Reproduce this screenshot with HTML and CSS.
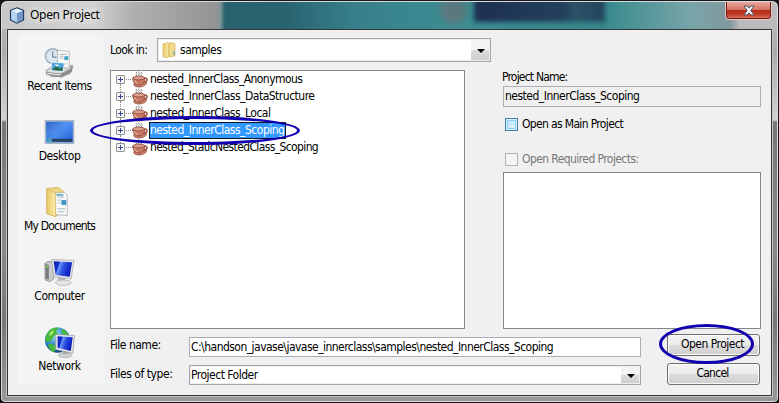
FILE: index.html
```
<!DOCTYPE html>
<html lang="en">
<head>
<meta charset="utf-8">
<title>Open Project</title>
<link rel="stylesheet" href="styles.css">
</head>
<body>
<svg width="0" height="0" class="defs" aria-hidden="true">
  <defs>
    <linearGradient id="screen" x1="0" y1="0" x2="1" y2=".3"><stop offset="0" stop-color="#0b18a8"/><stop offset=".3" stop-color="#1430d8"/><stop offset=".36" stop-color="#6d98f4"/><stop offset=".6" stop-color="#2a50e0"/><stop offset="1" stop-color="#0a1cc0"/></linearGradient>
    <linearGradient id="desk" x1="0" y1="0" x2="1" y2="1"><stop offset="0" stop-color="#1c55c4"/><stop offset=".5" stop-color="#4a8df0"/><stop offset="1" stop-color="#1d5bd0"/></linearGradient>
    <linearGradient id="fold" x1="0" y1="0" x2="1" y2="0"><stop offset="0" stop-color="#e9c964"/><stop offset="1" stop-color="#fbeeb0"/></linearGradient>
    <radialGradient id="globe" cx=".4" cy=".3" r=".7"><stop offset="0" stop-color="#9fe0f8"/><stop offset=".6" stop-color="#2d86c8"/><stop offset="1" stop-color="#123f86"/></radialGradient>
    <symbol id="cup" viewBox="0 0 16 17">
      <path d="M4 1l1 1.500-1 1 1 2M6.500 .5l1 2-1 1 1 2M9 1l1 1.500-1 1 1 2" fill="none" stroke="#777" stroke-width=".9"/>
      <path d="M2 12.500c-1.500 1.500 1 3.500 5 3.500 4.500 0 8-2.500 7.500-4.500z" fill="#c9816c" stroke="#8a4836" stroke-width=".7"/>
      <path d="M12 7c4.500-.5 4 4-1 4.200" fill="none" stroke="#a35340" stroke-width="1.500"/>
      <path d="M.8 7c-.3 3.500 2.200 7 6 7s6.200-3 6-7z" fill="#c87a65" stroke="#8b4635" stroke-width=".8"/>
      <ellipse cx="6.800" cy="7" rx="6" ry="1.900" fill="#dc9f8d" stroke="#8b4635" stroke-width=".8"/>
      <path d="M2.800 9.500c.5 1.800 1.500 2.800 2.800 3.200" fill="none" stroke="#f0c9bc"/>
    </symbol>
  </defs>
</svg>
<div class="window">
  <header class="titlebar">
    <svg class="app-icon" viewBox="0 0 16 17"><path d="M8 .8l6.500 2.700v9.500L8 16.200 1.500 13V3.500z" fill="#8fb2d6" stroke="#20345e" stroke-width="1.200"/><path d="M8 1.500l5.800 2.300L8 6.200 2.200 3.800z" fill="#e6f1fb"/><path d="M2.200 4L8 6.400v9L2.200 12.600z" fill="#b4d2ee"/><path d="M13.800 4L8 6.400v9l5.800-2.800z" fill="#6f96c4"/></svg>
    <h1>Open Project</h1>
    <i class="glass-blob"></i><i class="glass-text"></i>
    <div class="close"><svg width="12" height="11" viewBox="0 0 12 11"><path d="M1 1h3.200L6 3.300 7.800 1H11L7.800 5.500 11 10H7.800L6 7.700 4.200 10H1l3.200-4.500z" fill="#fff" stroke="#4b5068" stroke-width="1"/></svg></div>
  </header>
  <div class="client">
    <nav class="places">
      <div class="place">
        <svg viewBox="0 0 32 32"><path d="M2 25l7-5h21l-3 8-10 3H7z" fill="#d7d7d5" stroke="#999"/><path d="M2 26l15 2 10-5 2-5v8l-11 6-16-3z" fill="#8d8f8f"/><path d="M3 27l14 2v1l-14-2z" fill="#f2f2f2"/><circle cx="9" cy="10" r="7.500" fill="#dce9f0" stroke="#a3b6bf" stroke-width="1.800"/><path d="M9 5v6h4" fill="none" stroke="#6d8da0" stroke-width="1.200"/><path d="M14 4l12 1v17H14z" fill="#fafafa" stroke="#aaa" stroke-width=".8"/><path d="M16 8h8M16 10h4M16 12h4M16 18h8" stroke="#9aa4ab" stroke-width=".8"/><path d="M21 10h4v4h-4z" fill="#46a0cb"/><path d="M8 16l13 1-1 9-13-1z" fill="#4aa5da" stroke="#eee"/><path d="M8 24l5-4 3 3 3-2v4z" fill="#28683e"/><path d="M11 18l5 1-3 2z" fill="#d9f1fb"/></svg>
        <span class="t-recent">Recent Items</span>
      </div>
      <div class="place">
        <svg viewBox="0 0 32 32"><path d="M1.500 4.500h29v23h-29z" fill="url(#desk)" stroke="#a8b6c8" stroke-width="1.600"/><path d="M3 23h26v3H3z" fill="#29405d"/><path d="M3 6h26L3 20z" fill="#fff" opacity=".08"/><circle cx="5.500" cy="24.500" r="2.600" fill="#35a0d9"/><path d="M4 24h1.500v-1.500z" fill="#f06a31"/><path d="M6 25h2l-1 1z" fill="#f2d13c"/></svg>
        <span>Desktop</span>
      </div>
      <div class="place">
        <svg viewBox="0 0 32 32"><path d="M3 2l12-1 5 4v20l-8 6-9-3z" fill="#efd582" stroke="#cda94e" stroke-width=".7"/><path d="M11 7l10-1 3 3v21l-12-1z" fill="#f8fafb" stroke="#a7adb0" stroke-width=".8"/><path d="M14 11h7M14 14h4M14 17h3M14 23h8M14 26h7" stroke="#a8bac6"/><path d="M13 8h7v1.500h-7z" fill="#469eaa"/><path d="M18 14h5v5h-5z" fill="#3e93bf"/><path d="M3 2l9 5v24l-9-3z" fill="url(#fold)" stroke="#d0ad56" stroke-width=".7"/></svg>
        <span class="t-docs">My Documents</span>
      </div>
      <div class="place">
        <svg viewBox="0 0 32 32"><path d="M1 7l4-2 5 1v17l-4 3-5-2z" fill="#c9cbcc" stroke="#888" stroke-width=".8"/><path d="M1.500 7.500L5 9v15l-3.500-1z" fill="#777c80"/><path d="M2 9l2 1v2l-2-1z" fill="#75d842"/><path d="M14 22h8v4h-8z" fill="#b8bbbd"/><ellipse cx="20" cy="27" rx="8" ry="2.800" fill="#e3e4e5" stroke="#aaa" stroke-width=".7"/><path d="M8 3l23 1-3 19-18-2z" fill="#e5e6e8" stroke="#a6a8ab" stroke-width=".8"/><path d="M10 5l19 1-2.500 15L12 19z" fill="url(#screen)"/></svg>
        <span>Computer</span>
      </div>
      <div class="place">
        <svg viewBox="0 0 32 34"><circle cx="14" cy="15" r="13.500" fill="url(#globe)"/><path d="M4 6c3-4 8-5 11-4l-3 3 2 3-4 3-3 5-5 1c-2-3 0-8 2-11zM19 3c4 2 6 5 7 8l-5-1-3-3zM5 19l6 1 2 4-3 4c-3-1-6-5-6-9z" fill="#48b93a"/><path d="M6 7l4-3-1 4-4 3z" fill="#b9ed75"/><ellipse cx="22" cy="31" rx="7" ry="2.500" fill="#d4d5d7" stroke="#999" stroke-width=".7"/><path d="M19 26h6v4h-6z" fill="#a9abae"/><path d="M12 9l20 1-2 19-18-4z" fill="#e5e6e9" stroke="#999ca0" stroke-width=".8"/><path d="M14 11l16 1-2 14.500L14 23z" fill="url(#screen)"/></svg>
        <span>Network</span>
      </div>
    </nav>
    <main class="main">
      <div class="look">
        <label class="t-look">Look in:</label>
        <div class="combo">
          <svg class="folder" width="14" height="16" viewBox="0 0 14 16"><path d="M1 2l5-1.500 1 1v13L5 16l-4-1.500z" fill="url(#fold)" stroke="#c9a84d" stroke-width=".6"/><path d="M7 1h5l1 1v12l-6 1z" fill="#f1da88" stroke="#c9a84d" stroke-width=".6"/><path d="M12 9v4" stroke="#3c9ed0"/></svg>
          <span class="value">samples</span><i class="drop"></i>
        </div>
      </div>
      <div class="panes">
        <div class="tree">
          <div class="node"><i class="plus"></i><svg class="cup"><use href="#cup"/></svg><span class="t-n1">nested_InnerClass_Anonymous</span></div>
          <div class="node"><i class="plus"></i><svg class="cup"><use href="#cup"/></svg><span>nested_InnerClass_DataStructure</span></div>
          <div class="node"><i class="plus"></i><svg class="cup"><use href="#cup"/></svg><span>nested_InnerClass_Local</span></div>
          <div class="node selected"><i class="plus"></i><svg class="cup"><use href="#cup"/></svg><span>nested_InnerClass_Scoping</span></div>
          <div class="node"><i class="plus"></i><svg class="cup"><use href="#cup"/></svg><span class="t-n5">nested_StaticNestedClass_Scoping</span></div>
        </div>
        <section class="details">
          <label class="t-pname">Project Name:</label>
          <div class="field readonly"><span>nested_InnerClass_Scoping</span></div>
          <div class="check"><i class="box"></i><span class="t-main">Open as Main Project</span></div>
          <div class="check disabled"><i class="box"></i><span class="t-req">Open Required Projects:</span></div>
          <div class="list"></div>
        </section>
      </div>
      <div class="bottom">
        <div class="line">
          <label>File name:</label>
          <div class="field"><span class="t-path">C:\handson_javase\javase_innerclass\samples\nested_InnerClass_Scoping</span></div>
          <div class="button open"><span>Open Project</span></div>
        </div>
        <div class="line">
          <label class="t-ftype">Files of type:</label>
          <div class="combo small"><span class="value">Project Folder</span><i class="drop"></i></div>
          <div class="button cancel"><span class="t-cancel">Cancel</span></div>
        </div>
      </div>
    </main>
  </div>
  <div class="mark mark-node"></div>
  <div class="mark mark-open"></div>
</div>
</body>
</html>
```
FILE: styles.css
```
* { box-sizing: border-box; }
html, body { margin: 0; width: 779px; height: 403px; overflow: hidden; background: #14151b; }
body { font: 12px/16px "DejaVu Sans Condensed", "DejaVu Sans", sans-serif; font-stretch: condensed; color: #000; white-space: nowrap; letter-spacing: -0.5px; }
.defs { position: absolute; }
svg { flex: none; display: block; }
.window {
  position: relative; display: flex; flex-direction: column; width: 779px; height: 403px;
  padding: 0 6px 6px 6px; border: 1px solid #15161c; border-radius: 7px 7px 5px 5px;
  background: linear-gradient(#c4c4c4 0, #aaa 50px, #d2d2d2 119px, #777 121px, #8c8787 250px, #777 320px, #999);
  box-shadow: inset 0 0 0 1px #dcdcdc;
}
.titlebar {
  position: relative; overflow: hidden;
  display: flex; align-items: flex-start; height: 27px; margin: 1px -5px 0; padding: 5px 5px 0 7px; border-radius: 5px 5px 0 0;
  background:
    linear-gradient(90deg, #c8c8c8 0, #d2d2d2 90px, #b0b0b0 130px, #929494 214px, #84979a 218px, #29616e 223px, #286470 285px, #377f8a 350px, #3c8d92 450px, #34898b 600px, #79a5a9 690px, #80989d 728px, #bbb 738px);
}
.glass-blob { position: absolute; left: 438px; top: -4px; width: 27px; height: 26px; border-radius: 50%; background: #63737a; filter: blur(3px); opacity: .8; }
.glass-text { position: absolute; left: 472px; top: -4px; width: 131px; height: 24px; background: linear-gradient(90deg, #1d2f52, #24405c 70%, #2b5366 76%, #24445c); filter: blur(2.5px); }
.app-icon { width: 16px; height: 17px; }
h1 { margin: 0 0 0 5px; font: 12px/16px "Noto Sans", sans-serif; letter-spacing: -.3px; text-shadow: 0 0 8px #fff, 0 0 8px #fff; }
.close {
  display: flex; align-items: center; justify-content: center; width: 47px; height: 19px; margin: -6px 0 0 auto;
  border: 1px solid #eac1bb; border-top: 0; border-radius: 0 0 4px 4px; box-shadow: inset 0 0 0 1px #692019;
  background: linear-gradient(#e9ada5, #d57363 48%, #b52b18 50%, #c33e27 75%, #dd7d61);
}
.client {
  display: flex; width: 765px; height: 367px; border: 1px solid #343638; background: #f0f0f0; box-shadow: 0 0 0 1px #c3c6c7;
}
.places { width: 85px; height: 351px; margin: 4px 0 0 10px; padding-top: 12px; background: #f4f4f4; }
.place { display: flex; flex-direction: column; align-items: center; height: 70px; padding-right: 2px; letter-spacing: -.4px; }
.place svg { width: 31px; height: 32px; }
.t-recent { letter-spacing: -.55px; }
.t-docs { letter-spacing: -.8px; }
.main { width: 652px; margin-left: 7px; }
.look { display: flex; align-items: center; height: 24px; margin-top: 8px; }
.look label { width: 47px; letter-spacing: -.6px; }
.combo {
  display: flex; align-items: center; width: 334px; height: 24px; padding: 1px; border: 1px solid #a5a6ac; background: #fff;
  box-shadow: inset 0 0 0 1px #eee;
}
.folder { margin: 0 4px 0 3px; }
.value { flex: 1; }
.drop { display: flex; width: 18px; height: 100%; align-items: center; justify-content: center; background: linear-gradient(#f4f4f4 48%, #dcdcdc 50%, #cfcfcf); }
.drop::before { content: ""; margin: 2px 0 0 2px; border: 4px solid transparent; border-top-color: #000; border-bottom: 0; }
.panes { display: flex; margin-top: 8px; gap: 37px; height: 259px; }
.tree { width: 355px; height: 259px; border: 1px solid #828790; background: #fff; }
.node { display: flex; align-items: center; height: 17px; padding-left: 5px; }
.plus {
  position: relative; width: 9px; height: 9px; border: 1px solid #919191; border-radius: 1px;
  background: linear-gradient(#39488c, #39488c) center/5px 1px no-repeat, linear-gradient(#39488c, #39488c) center/1px 5px no-repeat, #f4f4f4;
}
.plus::after { content: ""; display: block; width: 7px; margin: 3px 0 0 9px; border-top: 1px dotted #888; }
.node + .node .plus::before { content: ""; position: absolute; left: 3px; top: -9px; height: 8px; border-left: 1px dotted #888; }
.node svg { width: 16px; height: 17px; margin: 0 1px 0 7px; }
.node span { height: 17px; line-height: 16px; margin-left: 1px; }
.node.selected span { width: 137px; color: #fff; background: #3399ff; border: 1px solid #101820; margin-left: 0; line-height: 14px; }
.t-n1 { letter-spacing: -.57px; }
.t-n5 { letter-spacing: -.62px; }
.t-pname { letter-spacing: -.8px; }
.t-main { letter-spacing: -.65px; }
.t-req { letter-spacing: -.58px; }
.t-path { letter-spacing: -.53px; }
.t-ftype { letter-spacing: -.45px; }
.t-cancel { letter-spacing: -.75px; }
.details { width: 259px; height: 259px; display: flex; flex-direction: column; }
.details > label { height: 16px; line-height: 15px; }
.field { height: 20px; width: 452px; border: 1px solid #abadb3; background: #fff; padding-left: 1px; line-height: 18px; }
.details .field { width: 258px; height: 21px; margin-left: 1px; }
.readonly { background: #f0f0f0; }
.check { display: flex; align-items: center; height: 16px; margin: 9px 0 0 3px; gap: 4px; }
.check span { margin-top: -1px; }
.box { width: 13px; height: 13px; border: 1px solid #3c7fa9; background: linear-gradient(135deg, #b8e0f8, #e8f8ff); box-shadow: inset 0 0 0 1px #d9f1fd, inset 0 0 0 2px #8fcef3; }
.disabled { margin-top: 19px; color: #777; }
.disabled .box { border-color: #b4b4b4; background: #f5f5f5; box-shadow: none; }
.list { width: 258px; height: 157px; margin: 5px 0 0 1px; border: 1px solid #828790; background: #fff; }
.bottom { margin-top: 5px; }
.line { display: flex; align-items: center; height: 22px; margin-bottom: 7px; }
.line label { width: 79px; }
.line .field { margin-top: 4px; }
.combo.small { width: 452px; height: 20px; margin-top: 2px; padding: 1px; }
.button {
  display: flex; align-items: center; justify-content: center; width: 93px; height: 22px; margin-left: 26px; border: 1px solid #707070; border-radius: 3px;
  background: linear-gradient(#f4f4f4, #ebebeb 48%, #dddddd 50%, #cfcfcf); box-shadow: inset 0 0 0 1px #fafafa;
}
.open { padding-bottom: 2px; padding-right: 2px; }
.cancel { padding: 0 2px 2px 0; }
.mark { position: absolute; border: 3px solid #1200b0; border-radius: 50%; }
.mark-node { left: 89px; top: 115px; width: 210px; height: 29px; }
.mark-open { left: 658px; top: 323px; width: 95px; height: 40px; }
```
